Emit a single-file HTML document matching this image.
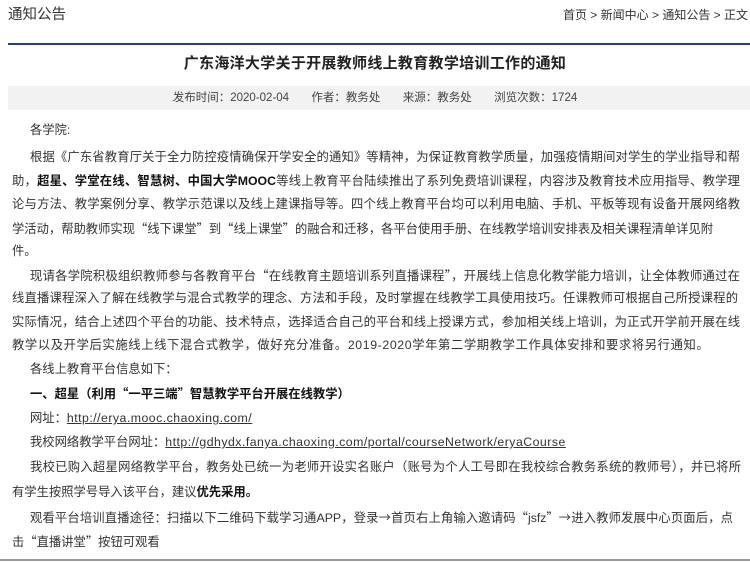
<!DOCTYPE html>
<html><head><meta charset="utf-8"><style>
*{margin:0;padding:0}
body{width:750px;height:562px;background:#fff;position:relative;overflow:hidden;font-family:"Liberation Sans","Noto Sans CJK SC",sans-serif;color:#333}
.l{position:absolute;white-space:nowrap;font-size:12.3px;line-height:18px;letter-spacing:0}
.j{text-align:justify;text-align-last:justify;white-space:normal;overflow:hidden;height:18px}
.q{font-family:"Noto Sans CJK SC",sans-serif}
b{color:#111}
a{color:#333;text-decoration:underline;letter-spacing:0.48px}
</style></head><body>
<div class="l" style="left:8px;top:5px;font-size:14.5px;line-height:20px;color:#333">通知公告</div>
<div class="l" style="right:2px;top:6px;font-size:12px">首页 &gt; 新闻中心 &gt; 通知公告 &gt; 正文</div>
<div style="position:absolute;left:8px;top:43px;width:742px;height:2px;background:#1c3e8f"></div>
<div class="l" style="left:0;width:750px;text-align:center;top:55px;font-size:15px;font-weight:bold;color:#222;letter-spacing:0.3px">广东海洋大学关于开展教师线上教育教学培训工作的通知</div>
<div style="position:absolute;left:8px;top:86px;width:742px;height:24px;background:#f2f2f2"></div>
<div class="l" style="left:0;width:750px;text-align:center;top:89px;font-size:11.5px;color:#444">发布时间：2020-02-04 &nbsp; &nbsp; &nbsp; 作者：教务处 &nbsp; &nbsp; &nbsp; 来源：教务处 &nbsp; &nbsp; &nbsp; 浏览次数：1724</div>

<div class="l" style="left:30px;top:121px">各学院:</div>
<div class="l j" style="left:30px;width:710px;top:148px">根据《广东省教育厅关于全力防控疫情确保开学安全的通知》等精神，为保证教育教学质量，加强疫情期间对学生的学业指导和帮</div>
<div class="l j" style="left:12px;width:728px;top:172px">助，<b>超星、学堂在线、智慧树、中国大学MOOC</b>等线上教育平台陆续推出了系列免费培训课程，内容涉及教育技术应用指导、教学理</div>
<div class="l j" style="left:12px;width:728px;top:195px">论与方法、教学案例分享、教学示范课以及线上建课指导等。四个线上教育平台均可以利用电脑、手机、平板等现有设备开展网络教</div>
<div class="l" style="left:12px;top:219px">学活动，帮助教师实现<span class="q">“</span>线下课堂<span class="q">”</span>到<span class="q">“</span>线上课堂<span class="q">”</span>的融合和迁移，各平台使用手册、在线教学培训安排表及相关课程清单详见附</div>
<div class="l" style="left:12px;top:242px">件。</div>
<div class="l j" style="left:30px;width:710px;top:266px">现请各学院积极组织教师参与各教育平台<span class="q">“</span>在线教育主题培训系列直播课程<span class="q">”</span>，开展线上信息化教学能力培训，让全体教师通过在</div>
<div class="l j" style="left:12px;width:726px;top:289px">线直播课程深入了解在线教学与混合式教学的理念、方法和手段，及时掌握在线教学工具使用技巧。任课教师可根据自己所授课程的</div>
<div class="l j" style="left:12px;width:728px;top:313px">实际情况，结合上述四个平台的功能、技术特点，选择适合自己的平台和线上授课方式，参加相关线上培训，为正式开学前开展在线</div>
<div class="l" style="left:12px;top:336px;letter-spacing:0.62px">教学以及开学后实施线上线下混合式教学，做好充分准备。2019-2020学年第二学期教学工作具体安排和要求将另行通知。</div>
<div class="l" style="left:30px;top:360px">各线上教育平台信息如下：</div>
<div class="l" style="left:30px;top:384px"><b>一、超星（利用<span class="q">“</span>一平三端<span class="q">”</span>智慧教学平台开展在线教学）</b></div>
<div class="l" style="left:30px;top:409px">网址：<a>http://erya.mooc.chaoxing.com/</a></div>
<div class="l" style="left:30px;top:433px">我校网络教学平台网址：<a>http://gdhydx.fanya.chaoxing.com/portal/courseNetwork/eryaCourse</a></div>
<div class="l j" style="left:30px;width:711px;top:458px">我校已购入超星网络教学平台，教务处已统一为老师开设实名账户（账号为个人工号即在我校综合教务系统的教师号），并已将所</div>
<div class="l" style="left:12px;top:483px">有学生按照学号导入该平台，建议<b>优先采用。</b></div>
<div class="l j" style="left:30px;width:703px;top:508px">观看平台培训直播途径：扫描以下二维码下载学习通APP，登录<span class="q">→</span>首页右上角输入邀请码<span class="q">“</span>jsfz<span class="q">”</span><span class="q">→</span>进入教师发展中心页面后，点</div>
<div class="l" style="left:12px;top:532px">击<span class="q">“</span>直播讲堂<span class="q">”</span>按钮可观看</div>
<div style="position:absolute;left:0;top:559px;width:750px;height:2px;background:#999"></div>
</body></html>
